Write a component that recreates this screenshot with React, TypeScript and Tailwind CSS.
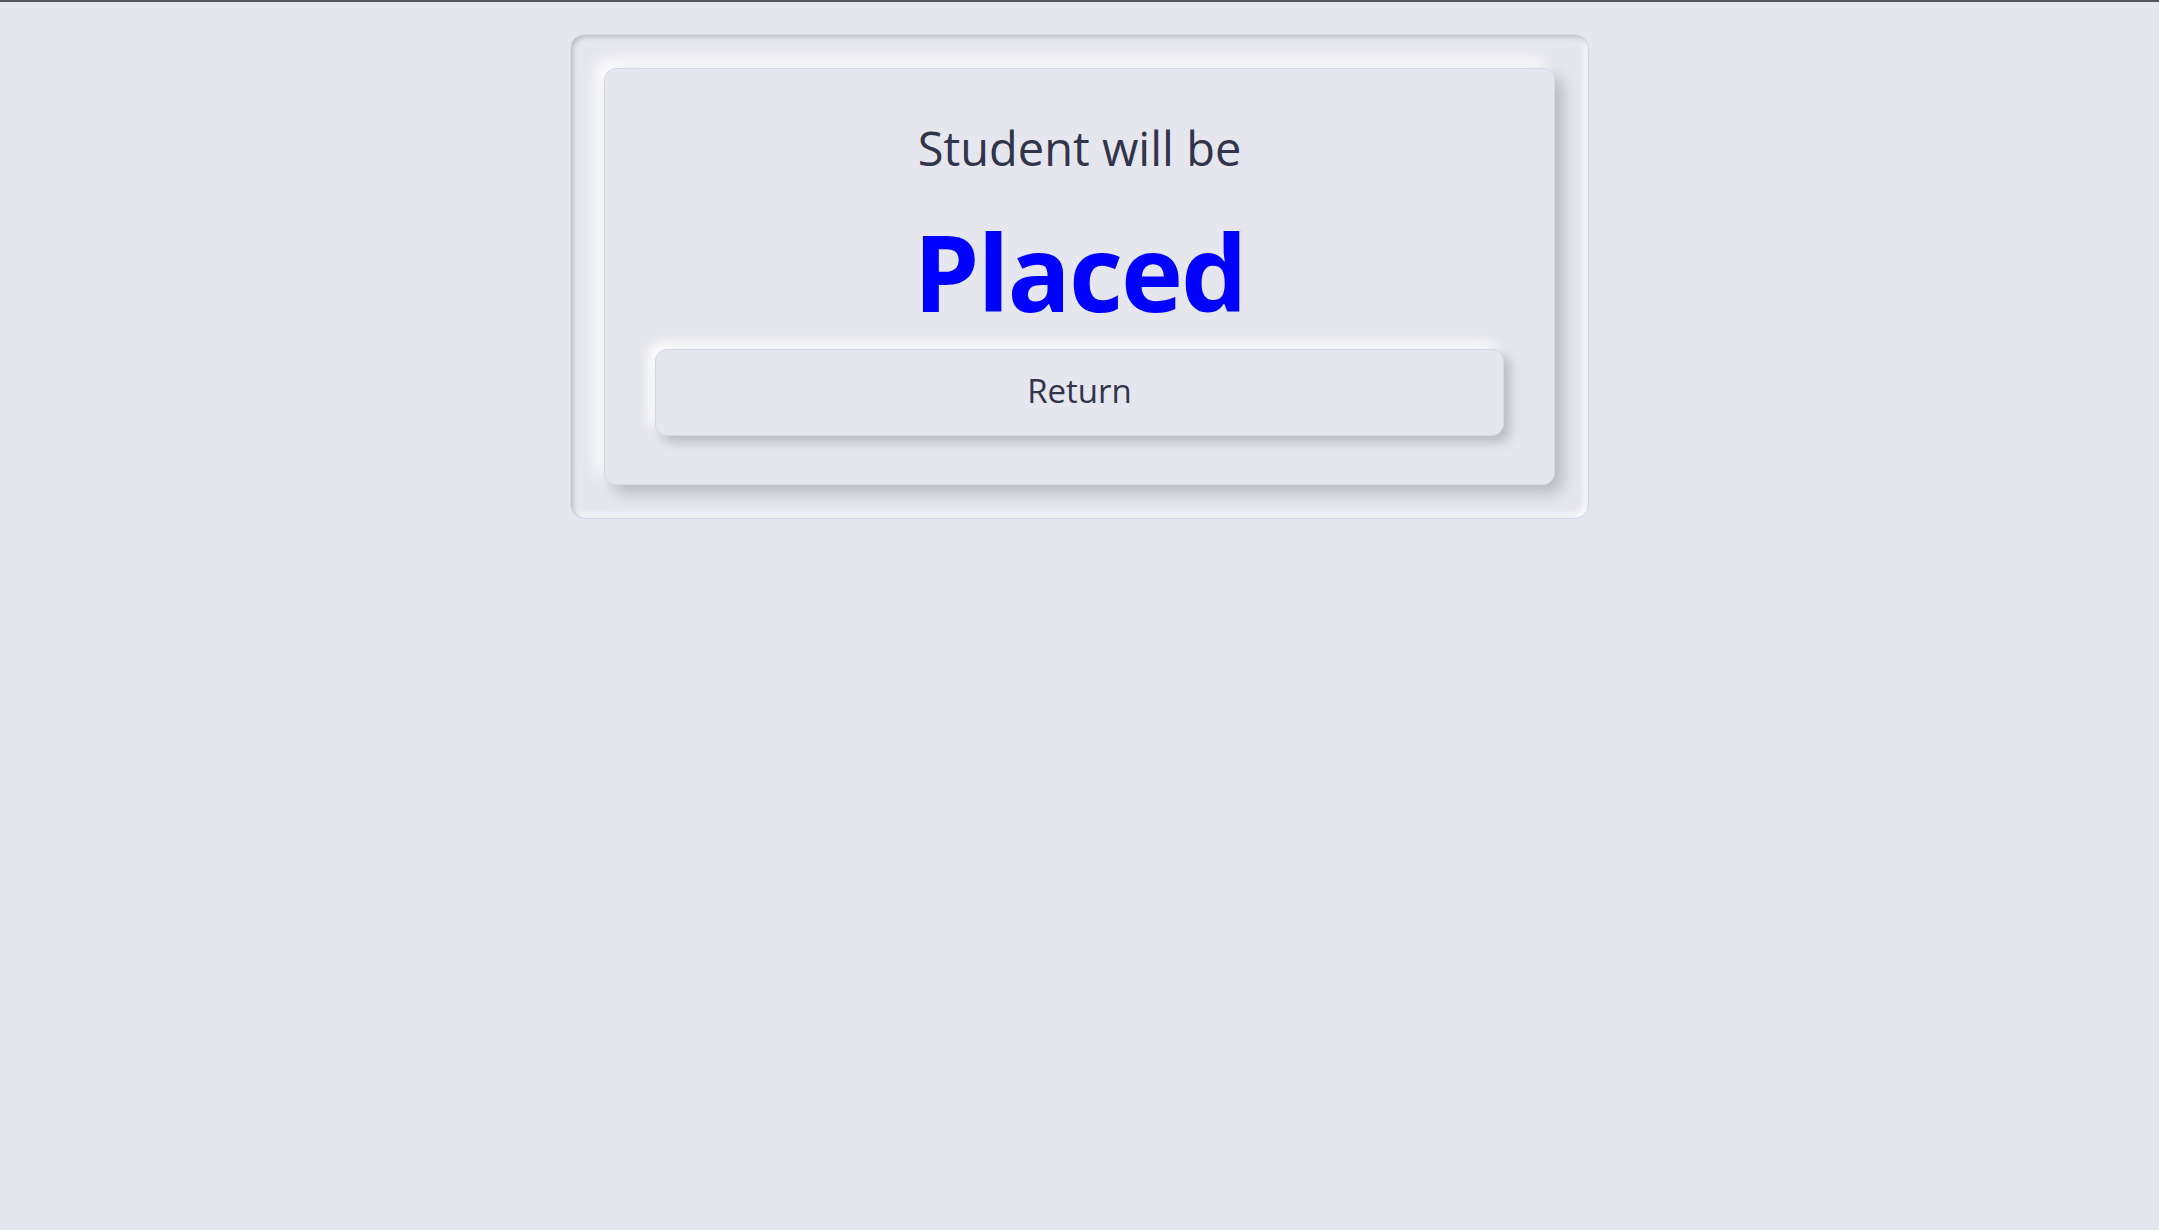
export default function App() {
  return (
    <div className="min-h-screen w-full bg-[#e6e7ee] border-t-2 border-[#55565a] font-['Open_Sans',sans-serif] text-[#31344b]">
      <div className="flex justify-center pt-[32px]">
        {/* outer inset frame */}
        <div className="w-[1019px] p-[33px] rounded-[14px] border border-[#d1d9e6] bg-[#e6e7ee] shadow-[inset_2px_2px_5px_#b8b9be,inset_-3px_-3px_7px_#ffffff]">
          {/* raised card */}
          <div className="flex flex-col items-center px-[50px] pt-[52px] pb-[48px] rounded-[12px] border border-[#d1d9e6] bg-[#e6e7ee] shadow-[8px_8px_16px_#b8b9be,-8px_-8px_16px_#ffffff]">
            <h3 className="text-[47px] leading-[54px] font-normal">Student will be</h3>
            <h1 className="mt-[34px] text-[105px] leading-[126px] font-bold text-[#0000ff] tracking-[-2px]">Placed</h1>
            <button className="mt-[14px] w-full h-[87px] flex items-center justify-center rounded-[12px] border border-[#d1d9e6] bg-[#e6e7ee] text-[33px] text-[#31344b] shadow-[6px_6px_12px_#b8b9be,-6px_-6px_12px_#ffffff]">
              <span className="-mt-[3px]">Return</span>
            </button>
          </div>
        </div>
      </div>
    </div>
  );
}
